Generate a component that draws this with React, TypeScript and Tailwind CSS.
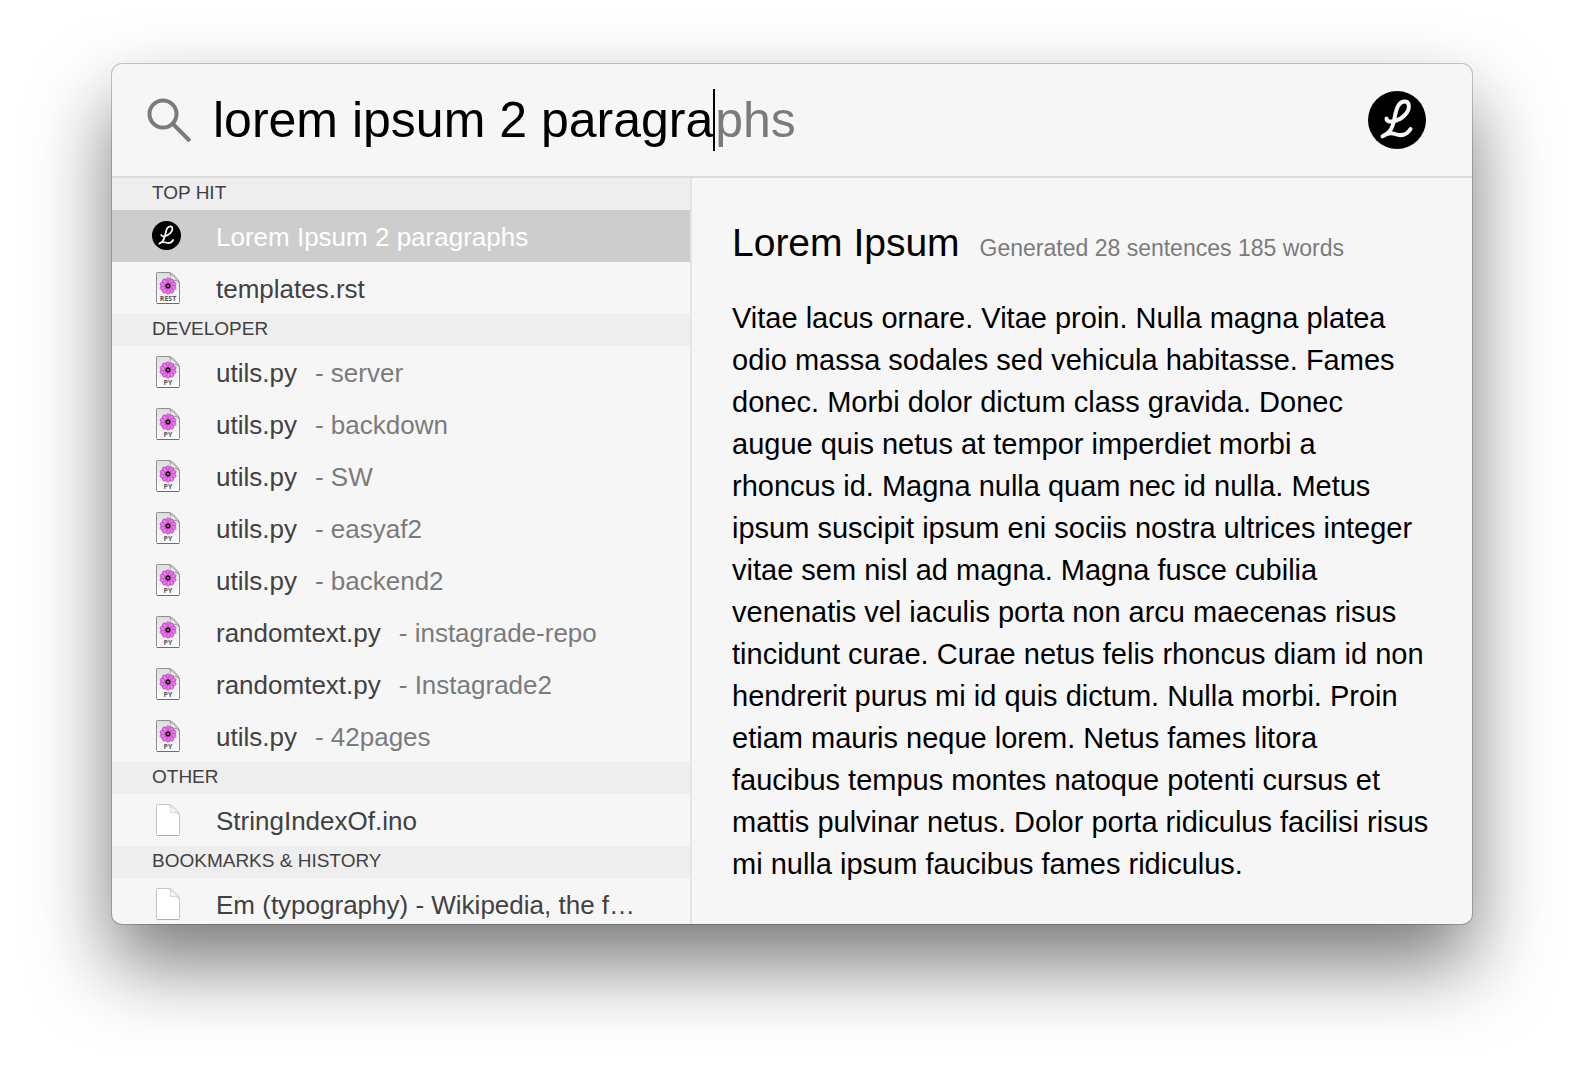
import React from "react";

type Kind = "logo" | "rest" | "py" | "blank";
type Item = { kind: Kind; name: string; detail?: string; selected?: boolean };
type Section = { title: string; items: Item[] };

const sections: Section[] = [
  {
    title: "TOP HIT",
    items: [
      { kind: "logo", name: "Lorem Ipsum 2 paragraphs", selected: true },
      { kind: "rest", name: "templates.rst" },
    ],
  },
  {
    title: "DEVELOPER",
    items: [
      { kind: "py", name: "utils.py", detail: "server" },
      { kind: "py", name: "utils.py", detail: "backdown" },
      { kind: "py", name: "utils.py", detail: "SW" },
      { kind: "py", name: "utils.py", detail: "easyaf2" },
      { kind: "py", name: "utils.py", detail: "backend2" },
      { kind: "py", name: "randomtext.py", detail: "instagrade-repo" },
      { kind: "py", name: "randomtext.py", detail: "Instagrade2" },
      { kind: "py", name: "utils.py", detail: "42pages" },
    ],
  },
  { title: "OTHER", items: [{ kind: "blank", name: "StringIndexOf.ino" }] },
  {
    title: "BOOKMARKS & HISTORY",
    items: [{ kind: "blank", name: "Em (typography) - Wikipedia, the f…" }],
  },
];

const paragraph = `Vitae lacus ornare. Vitae proin. Nulla magna platea
odio massa sodales sed vehicula habitasse. Fames
donec. Morbi dolor dictum class gravida. Donec
augue quis netus at tempor imperdiet morbi a
rhoncus id. Magna nulla quam nec id nulla. Metus
ipsum suscipit ipsum eni sociis nostra ultrices integer
vitae sem nisl ad magna. Magna fusce cubilia
venenatis vel iaculis porta non arcu maecenas risus
tincidunt curae. Curae netus felis rhoncus diam id non
hendrerit purus mi id quis dictum. Nulla morbi. Proin
etiam mauris neque lorem. Netus fames litora
faucibus tempus montes natoque potenti cursus et
mattis pulvinar netus. Dolor porta ridiculus facilisi risus
mi nulla ipsum faucibus fames ridiculus.`;

function LogoMark({ stroke }: { stroke: number }) {
  return (
    <>
      <circle cx="29" cy="29" r="29" fill="#000" />
      <path
        d="M18.500 27.500C18.500 31 23 31 27 30C34.500 28 41.500 21 40.800 14.500C40.300 9 33.500 9.500 30.400 14.500C27.200 19.500 27 27 25.300 32.500C23.500 38.500 21.500 42 14.500 45.300C19 42 23 41.500 27 43C33 45.300 38.500 44.500 42.500 38"
        fill="none"
        stroke="#f6f6f6"
        strokeWidth={stroke}
        strokeLinecap="round"
        strokeLinejoin="round"
      />
    </>
  );
}

const petals = [0, 36, 72, 108, 144, 180, 216, 252, 288, 324];

function FileIcon({ label }: { label?: string }) {
  const outline = label ? "#8e8e8e" : "#c4c4c4";
  return (
    <svg viewBox="0 0 32 32" className="size-8 shrink-0" aria-hidden="true">
      <defs>
        <linearGradient id="paper" x1="0" y1="0" x2="0" y2="1">
          <stop offset="0" stopColor="#dedede" />
          <stop offset="1" stopColor="#fdfdfd" />
        </linearGradient>
      </defs>
      <path
        d="M4.500 1.500Q4.500.500 5.500.500H17.500Q19.500 1 21.500 3L26 7.500Q27.500 9.500 27.500 11.500V30.500Q27.500 31.500 26.500 31.500H5.500Q4.500 31.500 4.500 30.500Z"
        fill={label ? "url(#paper)" : "#fff"}
        stroke={outline}
      />
      <path
        d="M17.500 1C19 3 19 6 18.500 8.500C21.500 8 25 8 27 10.500Z"
        fill="#fff"
        stroke={outline}
        strokeWidth="0.8"
        strokeLinejoin="round"
      />
      <path d="M5 31.500H27" stroke={label ? "#6b6b6b" : "#b0b0b0"} strokeWidth="1" />
      {label && (
        <>
          {petals.map((angle) => (
            <ellipse
              key={angle}
              cx="16"
              cy="8.900"
              rx="2.200"
              ry="3.200"
              fill="#ea78ec"
              stroke="#a436ac"
              strokeWidth="0.600"
              transform={`rotate(${angle} 16 14)`}
            />
          ))}
          <circle cx="16" cy="14" r="3" fill="#a53aad" />
          <circle cx="16" cy="14" r="2.400" fill="#24101c" />
          <circle cx="16" cy="14" r="1" fill="#c98a4a" />
          <text
            x="16"
            y="29"
            textAnchor="middle"
            fontFamily="Open Sans, sans-serif"
            fontWeight="700"
            fontSize="7"
            fill="#555"
          >
            {label}
          </text>
        </>
      )}
    </svg>
  );
}

function ItemIcon({ kind }: { kind: Kind }) {
  if (kind === "logo")
    return (
      <svg viewBox="0 0 64 64" className="size-8 shrink-0" aria-hidden="true">
        <g transform="translate(0 2)">
          <LogoMark stroke={3.5} />
        </g>
      </svg>
    );
  return <FileIcon label={kind === "rest" ? "REST" : kind === "py" ? "PY" : undefined} />;
}

function Row({ item }: { item: Item }) {
  return (
    <li>
      <button
        type="button"
        className={
          item.selected
            ? "flex h-[52px] w-full items-center gap-8 bg-[#cdcdcd] pl-10 text-left text-[26px] whitespace-nowrap text-white"
            : "flex h-[52px] w-full items-center gap-8 pl-10 text-left text-[26px] whitespace-nowrap text-[#414141]"
        }
      >
        <ItemIcon kind={item.kind} />
        <span className="flex gap-[18px] pt-0.5">
          <span>{item.name}</span>
          {item.detail && <span className="text-[#7b7b7b]">- {item.detail}</span>}
        </span>
      </button>
    </li>
  );
}

export default function App() {
  return (
    <div className="h-screen overflow-hidden bg-white px-28 pt-16 font-['Liberation_Sans',Arial,sans-serif]">
      <main className="flex h-[calc(100vh-224px)] flex-col overflow-hidden rounded-[10px] bg-[#f6f6f6] shadow-[0_0_0_1px_rgba(0,0,0,0.2),0_40px_80px_rgba(0,0,0,0.53)]">
        <header className="flex h-[114px] shrink-0 items-center border-b-2 border-[#dcdcdc] pr-[46px] pl-[35px]">
          <svg viewBox="0 0 44 44" className="size-11 shrink-0" fill="none" stroke="#7b7b7b" strokeWidth="4" aria-hidden="true">
            <circle cx="16" cy="16" r="13.500" />
            <path d="M25.500 25.500L43 43" />
          </svg>
          <div className="ml-[22px] flex flex-1 items-center text-[50px]">
            <input
              type="text"
              aria-label="Search"
              defaultValue="lorem ipsum 2 paragra"
              className="field-sizing-content bg-transparent text-black outline-none"
            />
            <span className="h-[62px] w-0.5 shrink-0 bg-black" />
            <span className="text-[#7b7b7b]">phs</span>
          </div>
          <svg viewBox="0 0 58 58" className="size-[58px] shrink-0" role="img" aria-label="Lorem Ipsum">
            <LogoMark stroke={4} />
          </svg>
        </header>
        <div className="flex min-h-0 flex-1">
          <nav className="w-[580px] shrink-0 overflow-hidden border-r-2 border-[#e4e4e4]">
            {sections.map((section) => (
              <section key={section.title}>
                <h2 className="flex h-8 items-center bg-[#eee] pb-0.5 pl-10 text-[19px] text-[#414141]">{section.title}</h2>
                <ul>
                  {section.items.map((item, i) => (
                    <Row key={i} item={item} />
                  ))}
                </ul>
              </section>
            ))}
          </nav>
          <article className="min-w-0 flex-1 overflow-hidden px-10 pt-10">
            <div className="flex items-baseline gap-5 leading-[50px] whitespace-nowrap">
              <h1 className="text-[39px] text-black">Lorem Ipsum</h1>
              <p className="text-[23px] text-[#7b7b7b]">Generated 28 sentences 185 words</p>
            </div>
            <p className="mt-6 text-[29px] leading-[42px] whitespace-pre-line text-black">{paragraph}</p>
          </article>
        </div>
      </main>
    </div>
  );
}
